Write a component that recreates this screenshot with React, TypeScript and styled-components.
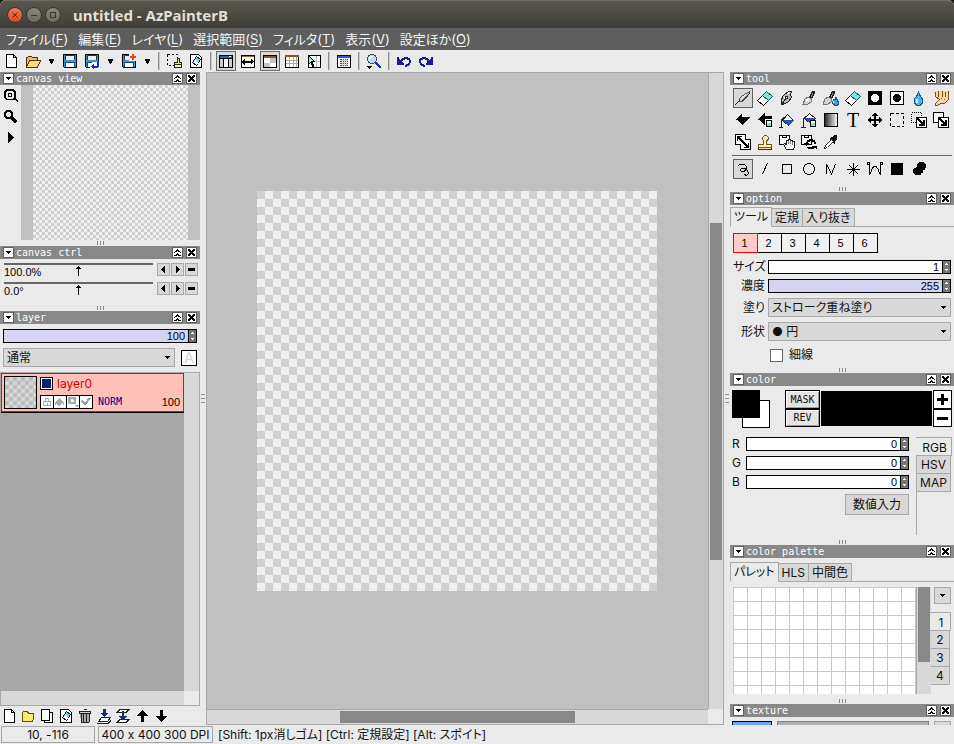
import React from 'react';
import styled, { createGlobalStyle, css } from 'styled-components';

const ui = '"Inter", "Noto Sans CJK JP", sans-serif';
const mono = '"DejaVu Sans Mono", monospace';
const digits = '"Liberation Sans", sans-serif';
const edge = '#a8a8a8';
const face = '#d8d8d8';
const base = '#eaeaea';

const checker = (a: string, b: string, cell: number) => css`
  background: conic-gradient(${a} 25%, ${b} 0 50%, ${a} 0 75%, ${b} 0) 0 0 / ${cell * 2}px ${cell * 2}px;
`;

const Global = createGlobalStyle`
  *, *::before, *::after { box-sizing: border-box; }
  html, body, #root { height: 100%; }
  body { margin: 0; overflow: hidden; background: ${base}; }
  button, input, select { font: inherit; color: inherit; margin: 0; padding: 0; border-radius: 0; }
  button { display: flex; align-items: center; justify-content: center; border: 0; background: none; }
  svg { display: block; flex: none; }
`;

const Window = styled.div`
  display: flex;
  flex-direction: column;
  height: 100vh;
  background: ${base};
  color: #111;
  font: 12px/16px ${ui};
  font-feature-settings: 'palt', 'calt' 0;
`;

const TitleBar = styled.header`
  display: flex;
  align-items: center;
  gap: 3px;
  height: 28px;
  padding: 0 7px;
  border-top: 1px solid #6d6a61;
  border-radius: 6px 6px 0 0;
  background: linear-gradient(#5a574e, #3e3d38);
  box-shadow: 0 -6px 0 6px #111;
  clip-path: inset(0);
`;

const WindowButton = styled.button<{ $close?: boolean }>`
  width: 16px;
  height: 16px;
  border: 1px solid #38372f;
  border-radius: 50%;
  background: ${p => (p.$close ? 'linear-gradient(#f5794f, #df4a1d)' : 'linear-gradient(#8b887e, #6c6a61)')};
`;

const Title = styled.h1`
  margin: 0 0 0 9px;
  color: #e2dfd5;
  font: bold 15px/20px "Noto Sans", sans-serif;
`;

const MenuBar = styled.nav`
  display: flex;
  gap: 10px;
  height: 22px;
  padding: 0 6px;
  background: #5e5e5e;
  color: #f4f4f4;
  font-size: 13px;
`;

const MenuButton = styled.button`
  white-space: nowrap;
  u { text-underline-offset: 2px; }
`;

const ToolBar = styled.div`
  display: flex;
  align-items: center;
  height: 22px;
`;

const BarButton = styled.button<{ $on?: boolean }>`
  width: 20px;
  height: 20px;
  margin: 0 1px;
  border: 1px solid ${p => (p.$on ? '#6a6a6a' : 'transparent')};
  background: ${p => (p.$on ? face : 'transparent')};
`;

const DropButton = styled.button`
  width: 15px;
  height: 20px;
`;

const BarSeparator = styled.span`
  width: 2px;
  height: 18px;
  margin: 0 3px;
  background: linear-gradient(90deg, #8c8c8c 50%, #c8c8c8 0);
`;

const Main = styled.main`
  display: flex;
  flex: 1;
  min-height: 0;
`;

const Dock = styled.aside<{ $w: number }>`
  display: flex;
  flex: none;
  flex-direction: column;
  width: ${p => p.$w}px;
  min-height: 0;
  overflow: hidden;
`;

const Splitter = styled.div`
  display: flex;
  flex: none;
  flex-direction: column;
  align-items: center;
  justify-content: center;
  gap: 3px;
  width: 6px;
  &::before, &::after, & > i { content: ''; width: 4px; height: 1px; background: #909090; }
`;

const Grip = styled.div`
  display: flex;
  flex: none;
  align-items: flex-start;
  justify-content: center;
  gap: 2px;
  height: 6px;
  padding-top: 1px;
  &::before, &::after, & > i { content: ''; width: 1px; height: 4px; background: #888; }
`;

const PanelHeader = styled.div`
  display: flex;
  flex: none;
  align-items: center;
  gap: 3px;
  height: 13px;
  padding: 0 3px;
  background: #888;
  color: #fff;
  font: 10px/13px ${mono};
`;

const PanelTitle = styled.h2`
  flex: 1;
  margin: 0 0 0 -1px;
  font: inherit;
`;

const HeaderButton = styled.button`
  width: 11px;
  height: 11px;
  border: 1px solid #606060;
  background: #fff;
`;

const ViewBody = styled.div`
  display: flex;
  flex: none;
  height: 155px;
`;

const ViewTools = styled.div`
  display: flex;
  flex-direction: column;
  align-items: center;
  gap: 1px;
  width: 21px;
  padding-top: 1px;
`;

const ViewButton = styled.button`
  width: 20px;
  height: 20px;
`;

const Preview = styled.div`
  flex: 1;
  padding: 0 12px;
  background: #c0c0c0;
`;

const PreviewImage = styled.div`
  height: 100%;
  ${checker('#efefef', '#d0d0d0', 3)}
`;

const CtrlBody = styled.div`
  display: flex;
  flex: none;
  flex-direction: column;
  gap: 6px;
  height: 46px;
  padding: 4px 2px 0 3px;
`;

const CtrlRow = styled.div`
  display: flex;
  gap: 1px;
  height: 13px;
`;

const CtrlTrack = styled.div`
  display: grid;
  grid-template-columns: 70px 1fr;
  flex: 1;
  height: 15px;
  margin: 0 3px 0 1px;
  border-top: 2px solid #666;
  color: #000;
  font: 11px/14px ${digits};
`;

const SmallButton = styled.button`
  width: 13px;
  height: 13px;
  border: 1px solid ${edge};
  background: ${face};
`;

const SpinFrame = styled.div<{ $tint?: boolean }>`
  display: flex;
  flex: 1;
  min-width: 0;
  height: 14px;
  border: 1px solid #000;
  background: ${p => (p.$tint ? '#d4d4f0' : '#fff')};
`;

const SpinInput = styled.input`
  flex: 1;
  min-width: 0;
  padding-right: 3px;
  border: 0;
  outline: 0;
  background: none;
  color: #000;
  text-align: right;
  font: 11px/12px ${digits};
`;

const SpinArrows = styled.button`
  width: 8px;
  border-left: 1px solid #000;
  background: #777;
`;

const SelectFrame = styled.div`
  display: grid;
  flex: 1;
  align-items: center;
  min-width: 0;
  height: 19px;
  border: 1px solid ${edge};
  background: ${face};
  & > * { grid-area: 1 / 1; }
  & > svg { justify-self: end; margin-right: 4px; pointer-events: none; }
`;

const SelectBox = styled.select`
  appearance: none;
  width: 100%;
  height: 17px;
  padding: 0 14px 0 3px;
  border: 0;
  outline: 0;
  background: none;
`;

const LayerBody = styled.div`
  display: flex;
  flex: 1;
  flex-direction: column;
  min-height: 0;
`;

const LayerFields = styled.div`
  display: flex;
  flex: none;
  flex-direction: column;
  gap: 5px;
  padding: 5px 3px;
`;

const Line = styled.div`
  display: flex;
  align-items: center;
  gap: 6px;
`;

const AlphaButton = styled.button`
  width: 16px;
  height: 16px;
  border: 1px solid #000;
  background: #fff;
  color: #d4d4d4;
  font: 14px/14px ${ui};
`;

const LayerList = styled.div`
  display: grid;
  flex: 1;
  grid-template: 1fr 14px / 1fr 15px;
  min-height: 0;
  border: 1px solid ${edge};
`;

const LayerItems = styled.ul`
  margin: 0;
  padding: 0;
  background: ${edge};
  list-style: none;
`;

const Groove = styled.div`
  background: ${face};
`;

const LayerItem = styled.li`
  display: flex;
  gap: 3px;
  height: 39px;
  padding: 2px;
  border: 1px solid #f00;
  background: #ffc0b8;
  box-shadow: 0 1px 0 #000;
`;

const LayerThumb = styled.div`
  width: 33px;
  height: 33px;
  border: 1px solid #000;
  ${checker('#d6d6d6', '#bcbcbc', 4)}
`;

const LayerInfo = styled.div`
  display: flex;
  flex: 1;
  flex-direction: column;
  justify-content: space-between;
  padding: 1px 0 0;
`;

const LayerName = styled.div`
  display: flex;
  align-items: center;
  gap: 4px;
  height: 13px;
  color: #d00000;
`;

const VisibleButton = styled.button`
  width: 13px;
  height: 13px;
  border: 1px solid #000;
  background: #00207c;
  box-shadow: inset 0 0 0 1px #fff;
`;

const LayerFlags = styled.div`
  display: flex;
  align-items: center;
  height: 14px;
  color: #000080;
  font: 10px/14px ${mono};
`;

const FlagButton = styled.button`
  width: 14px;
  height: 14px;
  margin-right: -1px;
  border: 1px solid #000;
  background: #fff;
`;

const BlendName = styled.span`
  flex: 1;
  margin-left: 6px;
`;

const LayerOpacity = styled.span`
  padding-right: 1px;
  color: #000;
  font: 11px/14px ${digits};
`;

const LayerTools = styled.div`
  display: flex;
  flex: none;
  align-items: center;
  gap: 1px;
  height: 19px;
`;

const LayerToolButton = styled.button`
  width: 18px;
  height: 18px;
`;

const CanvasArea = styled.section`
  display: grid;
  flex: 1;
  grid-template: 1fr 15px / 1fr 15px;
  min-width: 0;
  border: 1px solid ${edge};
`;

const CanvasView = styled.div`
  display: flex;
  align-items: center;
  justify-content: center;
  padding-right: 1px;
  overflow: hidden;
  background: #c0c0c0;
`;

const CanvasImage = styled.div`
  flex: none;
  width: 400px;
  height: 400px;
  ${checker('#efefef', '#d0d0d0', 8)}
`;

const VScroll = styled.div`
  display: grid;
  grid-template-rows: 150fr 337fr 149fr;
  padding: 0 1px;
  border-left: 1px solid ${edge};
  background: ${face};
`;

const HScroll = styled.div`
  display: grid;
  grid-template-columns: 133fr 235fr 133fr;
  padding: 1px 0;
  border-top: 1px solid ${edge};
  background: ${face};
`;

const Thumb = styled.div<{ $col?: boolean }>`
  ${p => (p.$col ? 'grid-column: 2;' : 'grid-row: 2;')}
  background: #888;
`;

const ToolBody = styled.div`
  flex: none;
  padding: 3px 2px 7px;
`;

const ToolGrid = styled.div`
  display: grid;
  grid-template-columns: repeat(10, 20px);
  gap: 2px;
  padding-left: 1px;
`;

const ToolRule = styled.hr`
  height: 1px;
  margin: 3px 0;
  border: 0;
  background: #666;
`;

const ToolButton = styled.button<{ $on?: boolean }>`
  width: 20px;
  height: 20px;
  border: 1px solid ${p => (p.$on ? '#606060' : 'transparent')};
  background: ${p => (p.$on ? face : 'transparent')};
  color: #000;
  font: 20px/18px "Liberation Serif", serif;
`;

const TabRow = styled.div`
  display: flex;
  align-items: flex-end;
  height: 20px;
  &::after { content: ''; flex: 1; border-bottom: 1px solid ${edge}; }
`;

const Tab = styled.button<{ $on?: boolean }>`
  height: ${p => (p.$on ? 20 : 19)}px;
  padding: 0 3px;
  border: 1px solid ${edge};
  border-left-width: ${p => (p.$on ? 1 : 0)}px;
  ${p => p.$on && 'border-bottom-color: transparent;'}
  background: ${p => (p.$on ? base : face)};
  white-space: nowrap;
`;

const OptionBody = styled.div`
  flex: none;
  height: 162px;
  padding-top: 2px;
`;

const PresetRow = styled.div`
  display: flex;
  margin: 6px 3px 7px;
`;

const Preset = styled.button<{ $on?: boolean }>`
  width: 25px;
  height: 20px;
  margin-right: -1px;
  border: 1px solid ${p => (p.$on ? '#f00' : '#000')};
  ${p => p.$on && 'z-index: 1;'}
  background: ${p => (p.$on ? '#ffcaca' : '#f0f0f0')};
  padding-right: 2px;
  color: #000;
  font: 11px/18px ${digits};
`;

const OptionFields = styled.div`
  display: grid;
  grid-template-columns: 32px 1fr;
  gap: 5px 3px;
  align-items: center;
  padding: 0 3px;
  & > label { line-height: 14px; text-align: right; white-space: nowrap; }
`;

const CheckLabel = styled.label`
  display: flex;
  align-items: center;
  gap: 6px;
  margin: 7px 0 0 40px;
  line-height: 14px;
`;

const CheckBox = styled.input`
  appearance: none;
  width: 13px;
  height: 13px;
  margin: 0;
  border: 1px solid #666;
  background: #fff;
`;

const ColorBody = styled.div`
  flex: none;
  height: 153px;
  padding: 4px 2px 0;
`;

const ColorTop = styled.div`
  display: grid;
  grid-template-columns: 53px 35px 1fr 19px;
  height: 38px;
`;

const SwatchPair = styled.div`
  display: grid;
  grid-template: 10px 18px 10px / 10px 18px 10px;
`;

const Swatch = styled.button<{ $back?: boolean }>`
  grid-area: ${p => (p.$back ? '2 / 2 / 4 / 4' : '1 / 1 / 3 / 3')};
  border: 1px solid #000;
  background: ${p => (p.$back ? '#fff' : '#000')};
`;

const ButtonStack = styled.div`
  display: grid;
  grid-template-rows: 19px 18px;
`;

const MaskButton = styled.button`
  border: 1px solid #000;
  background: #e4e4e4;
  box-shadow: inset 1px 1px 0 #fff, inset -1px -1px 0 #a0a0a0;
  font: 10px/16px ${mono};
`;

const StepButton = styled.button`
  border: 1px solid #000;
  background: #fff;
`;

const MaskColor = styled.div`
  margin: 1px 1px 2px;
  background: #000;
`;

const ColorMain = styled.div`
  display: flex;
  gap: 7px;
  margin-top: 9px;
`;

const Channels = styled.div`
  display: grid;
  flex: 1;
  grid-template-columns: 11px 1fr;
  gap: 5px 3px;
  align-content: start;
  & > label { line-height: 14px; }
`;

const ValueButton = styled.button`
  grid-column: 2;
  justify-self: end;
  height: 21px;
  padding: 0 7px;
  border: 1px solid ${edge};
  background: ${face};
`;

const SideTabs = styled.div<{ $h: number }>`
  display: flex;
  flex-direction: column;
  width: 36px;
  height: ${p => p.$h}px;
  border-left: 1px solid ${edge};
`;

const SideTab = styled.button<{ $on?: boolean }>`
  height: 19px;
  margin: 0 ${p => (p.$on ? 0 : 1)}px -1px ${p => (p.$on ? -1 : 0)}px;
  ${p => p.$on && 'padding-left: 2px; padding-top: 2px;'}
  border: 1px solid ${edge};
  border-left: 0;
  background: ${p => (p.$on ? base : face)};
`;

const PaletteBody = styled.div`
  flex: none;
  height: 140px;
  padding-top: 4px;
`;

const PaletteRow = styled.div`
  display: flex;
  height: 107px;
  margin: 5px 3px 0;
`;

const PaletteGrid = styled.div`
  flex: 1;
  border: solid #c8c8c8;
  border-width: 1px 0 0 1px;
  background:
    repeating-linear-gradient(90deg, transparent 0 13px, #c8c8c8 13px 14px),
    repeating-linear-gradient(#fff 0 13px, #c8c8c8 13px 14px);
`;

const PaletteScroll = styled.div`
  display: grid;
  grid-template-rows: 0 75px 1fr;
  width: 15px;
  padding: 0 1px;
  border-left: 1px solid ${edge};
  background: ${face};
`;

const PaletteSide = styled.div`
  display: flex;
  flex-direction: column;
  width: 20px;
`;

const PaletteMenu = styled.button`
  align-self: flex-end;
  width: 17px;
  height: 17px;
  margin-bottom: 8px;
  border: 1px solid ${edge};
  background: ${face};
`;

const TextureBody = styled.div`
  display: flex;
  flex: none;
  align-items: flex-start;
  gap: 5px;
  padding: 4px 3px 0 2px;
`;

const TextureSwatch = styled.button`
  width: 40px;
  height: 24px;
  border: 1px solid #000;
  background: #6ca6f0;
`;

const TextureName = styled.div`
  flex: 1;
  height: 24px;
  border: 1px solid #808080;
  background: #b0b0b0;
`;

const StatusBar = styled.footer`
  display: flex;
  align-items: center;
  gap: 3px;
  height: 19px;
  padding: 0 1px;
  white-space: nowrap;
`;

const StatusBox = styled.output<{ $w: number }>`
  min-width: ${p => p.$w}px;
  height: 17px;
  padding: 0 2px;
  border: 1px solid ${edge};
  line-height: 16px;
  text-align: center;
`;

const StatusHelp = styled.span`
  margin-left: 2px;
  line-height: 16px;
`;

type ArtProps = { w?: number; h?: number; children: React.ReactNode; soft?: boolean };
const Art = ({ w = 16, h = w, children, soft }: ArtProps) => (
  <svg width={w} height={h} viewBox={`0 0 ${w} ${h}`} fill="none" stroke="none"
    shapeRendering={soft ? 'auto' : 'crispEdges'} aria-hidden="true">{children}</svg>
);

const Down = () => <Art w={5} h={3}><path d="M0 0h5v1H4v1H3v1H2V2H1V1H0z" fill="#000" /></Art>;
const BigDown = () => <Art w={5} h={5}><path d="M0 0h5v2H4v2H3v1H2V4H1V2H0z" fill="#000" /></Art>;
const Collapse = () => (
  <Art w={9}><path d="M4 1h1v1h1v1h1v1H5V3H4v1H2V3h1V2h1zM4 5h1v1h1v1h1v1H5V7H4v1H2V7h1V6h1zM1 4h1v1H1zM7 4h1v1H7zM1 8h1v-1H1zM7 8h1v-1H7z" fill="#000" /></Art>
);
const Cross = () => (
  <Art w={9}><path d="M1 1h2v1h1v1h1V2h1V1h2v2H7v1H6v1h1v1h1v2H6V7H5V6H4v1H3v1H1V6h1V5h1V4H2V3H1z" fill="#000" /></Art>
);
const Spin = () => <Art w={5} h={10}><path d="M2 1h1v1h1v1H1V2h1zM1 7h3v1H3v1H2V8H1z" fill="#fff" /></Art>;

const disk = (
  <>
    <path d="M1.500 1.500h13v13h-12l-1-1z" fill="#3f97cc" stroke="#000" />
    <path d="M4 2h8v5H4z" fill="#e9eef2" /><path d="M4 2h8v1H4zM3 2h1v5H3zM12 2h1v5h-1z" fill="#173d5c" />
    <path d="M4 9h8v5H4z" fill="#fff" /><path d="M3 9h1v5H3zM12 9h1v5h-1zM4 9h8v1H4z" fill="#14466b" />
  </>
);
const page = <path d="M3.500 1.500h7l3 3v10h-10zM10.500 1.500v3h3" fill="#fff" stroke="#000" />;
const win = (
  <>
    <path d="M1.500 2.500h13v12h-13z" fill="#fff" stroke="#000" />
    <path d="M2 3h12v2H2z" fill="#2460c0" />
  </>
);
const boxArrow = (
  <>
    <path d="M5.500 5.500h10v10h-10z" fill="#fff" stroke="#000" />
    <path d="M6 6h2v1h1v1h1v1h1v1h1V8h2v6H8v-2h2v-1H9v-1H8V9H7V8H6z" fill="#000" />
  </>
);

const icons: Record<string, React.ReactNode> = {
  new: page,
  open: (
    <>
      <path d="M1.500 14V4.500h1l1-1h3l1 1h5V7" fill="#e8bf58" stroke="#4a3508" />
      <path d="M1.500 14.500L4.500 7.500h11l-3 7z" fill="#f7df7c" stroke="#4a3508" />
    </>
  ),
  save: disk,
  saveAs: (
    <>
      {disk}
      <path d="M8 9h8v7H6v-4h2z" fill="#fff" />
      <path d="M13 9h2v5h-1v1h-4v1H9v-1H8v-1H7v-1h1v-1h1v-1h1v2h3z" fill="#1420f0" />
    </>
  ),
  savePlus: (
    <>
      {disk}
      <path d="M8 0h8v8H8z" fill={base} />
      <path d="M11 1h2v2h2v2h-2v2h-2V5H9V3h2z" fill="#e8480c" />
    </>
  ),
  selClear: (
    <>
      <path d="M1.500 1.500h10v11h-10z" stroke="#000" strokeDasharray="2 2" />
      <path d="M8 8h8v8H8z" fill={base} />
      <path d="M11.500 5.500h2v4h2v2h-7v-2h3z" fill="#f0e070" stroke="#2a2410" />
      <path d="M8.500 11.500h7v3h-7z" fill="#fff8b0" stroke="#2a2410" />
    </>
  ),
  docErase: (
    <>
      <path d="M2.500 1.500h8l3 3v10h-11z" fill="#fff" stroke="#000" />
      <path d="M4.500 9.500l4-6 4 3-4 6z" fill="#7fd4ea" stroke="#123" /><path d="M5 9l2-2 3 3-2 2z" fill="#fff" />
    </>
  ),
  panels: (
    <>
      {win}<path d="M2 6h3v8H2zM11 6h3v8h-3z" fill="#d0d0d0" /><path d="M2 5h12v1H2zM5 5h1v9H5zM10 5h1v9h-1z" fill="#000" />
      <path d="M11 3h2v1h-2z" fill="#fff" />
    </>
  ),
  fit: (
    <>
      {win}<path d="M2 3h12v1H2z" fill="#9a6a20" /><path d="M2 4h12v1H2z" fill="#fff" />
      <path d="M5 6v2h6V6h1v1h1v1h1v1h-1v1h-1v1h-1v-1H5v2H4v-1H3v-1H2V8h1V7h1V6z" fill="#000" />
    </>
  ),
  checks: (
    <>
      {win}<path d="M2 3h12v2H2z" fill="#8a5a14" /><path d="M8 5h6v5H8zM2 10h6v4H2z" fill="#c4c4c4" />
    </>
  ),
  grid: (
    <>
      <path d="M1.500 2.500h13v12h-13z" fill="#fff" stroke="#000" /><path d="M1 2h14v2H1z" fill="#8a5a14" />
      <path d="M5.500 4v10M9.500 4v10M12.500 4v10M2 7.500h12M2 10.500h12" stroke="#aaa" />
    </>
  ),
  cursor: (
    <>
      <path d="M2.500 2.500h12v12h-12z" fill="#fff" stroke="#000" /><path d="M10.500 3v11M8 8.500h6" stroke="#c0c0c0" />
      <path d="M2 2h1v1h1v1h1v1h1v1h1v1h1v1h1v1H7v2h1v3H6v-2H5v-2H4v1H3v1H2z" fill="#000" />
      <path d="M3 4h1v1h1v1h1v1h1v1H5v1H4v1H3z" fill="#9ee2ea" />
    </>
  ),
  calc: (
    <>
      {win}<path d="M4 6h8v7H4z" fill="#444" /><path d="M4 7.500h8M4 9.500h8M4 11.500h8M6.500 6v7M8.500 6v7M10.500 6v7" stroke="#ddd" />
    </>
  ),
  zoom: (
    <>
      <path d="M9 9h2v1h1v1h1v1h1v1h1v2h-2v-1h-1v-1h-1v-1h-1v-1H9z" fill="#15308c" />
      <path d="M4 1h4v1h2v2h1v4h-1v2H8v1H4v-1H2V8H1V4h1V2h2z" fill="#3c4a58" />
      <path d="M4 2h4v1h1v1h1v4H9v1H8v1H4V9H3V8H2V4h1V3h1z" fill="#b8e0f6" /><path d="M4 3h3v1H5v2H4v1H3V4h1z" fill="#fff" />
      <path d="M1 13h5v1H5v1H4v1H3v-1H2v-1H1z" fill="#000" />
    </>
  ),
  undo: (
    <>
      <path d="M5 10c1-6 8-6 9-2 0 3-1 4-5 5" stroke="#1a1c88" strokeWidth="2" />
      <path d="M1 4h2v2h1v1h1v1h1v1h1v1h1v2H1z" fill="#1a1c88" />
    </>
  ),
  redo: (
    <>
      <path d="M11 10c-1-6-8-6-9-2 0 3 1 4 5 5" stroke="#1a1c88" strokeWidth="2" />
      <path d="M15 4h-2v2h-1v1h-1v1h-1v1H9v1H8v2h7z" fill="#1a1c88" />
    </>
  ),
  pencil: (
    <>
      <path d="M0 14h1v-1h1v-1h1v-1h1v1H3v1H2v1H1v1H0z" fill="#222" />
      <path d="M4.500 11.500v-3l2-2 8-5v2l-6 7-2 1z" fill="#c8c8c8" stroke="#555" />
      <path d="M6 9l5-5" stroke="#fff" /><path d="M7 11l8-8" stroke="#222" />
    </>
  ),
  eraser: (
    <>
      <path d="M9.500 1.500l6 5-9 9-6-5z" fill="#fff" stroke="#000" />
      <path d="M9.500 1.500l6 5-4 4-6-5z" fill="#82e4de" stroke="#256" />
    </>
  ),
  nib: (
    <>
      <path d="M2.500 14.500v-4l1-4 3-3 4-2h2l-1 3 1 3-3 4-3 2z" fill="#b4b8b8" stroke="#222" />
      <path d="M3 14l4-6" stroke="#222" /><path d="M6 6h3v3H6z" fill="#222" /><path d="M7 7h1v1H7z" fill="#fff" />
      <path d="M8 4l3-2M5 7v2" stroke="#fff" />
    </>
  ),
  brush: (
    <>
      <path d="M8 8V6h1V4h1V2h1V1h3v3h-1v2h-1v2h-1v1z" fill="#222" /><path d="M11 3h1v2h-1v2h-1V5h1z" fill="#888" />
      <path d="M2 14l2-5 3-2 4 2-1 3-3 2z" fill="#d4d4d4" stroke="#777" /><path d="M5 11l3-2" stroke="#fff" strokeWidth="2" />
    </>
  ),
  wetBrush: (
    <>
      <path d="M6 8V6h1V4h1V2h1V1h3v3h-1v2h-1v2H9v1z" fill="#222" /><path d="M9 3h1v2H9v2H8V5h1z" fill="#888" />
      <path d="M0 14l2-5 3-2 4 2-1 3-3 2z" fill="#d4d4d4" stroke="#777" />
      <path d="M12 7h1v2h1v2h1v3h-1v1h-3v-1h-1v-1H9v-2h1V9h2z" fill="#38a8ea" stroke="#0a5a9a" /><path d="M10 11h1v2h-1z" fill="#fff" />
    </>
  ),
  maskIn: <><path d="M1 1h14v14H1z" fill="#000" /><path d="M6 4h4v1h1v1h1v4h-1v1h-1v1H6v-1H5v-1H4V6h1V5h1z" fill="#fff" /></>,
  maskOut: <><path d="M1.500 1.500h13v13h-13z" fill="#fff" stroke="#000" /><path d="M6 4h4v1h1v1h1v4h-1v1h-1v1H6v-1H5v-1H4V6h1V5h1z" fill="#000" /></>,
  drop: (
    <>
      <path d="M7.500 1l1 4 3 4v4l-2 2h-4l-2-2V9l3-4z" fill="#4cb4ee" stroke="#14578c" /><path d="M5 9h2v4H5z" fill="#d8f4ff" />
    </>
  ),
  finger: (
    <>
      <path d="M1 1h14v9l-2 3H9l-5 3H2v-2l4-4-4-3z" fill="#f6d8a4" />
      <path d="M2 2l1 5 3 2M5 1l1 6M9 1v6M12 2v5M15 1v9l-3 3H9l-6 3-1-2 5-5M8 8h1M11 9h1" stroke="#7c4d18" />
    </>
  ),
  polyLeft: <path d="M1 7h1V6h1V5h1V4h1V3h1V2h1v3h8v1h-1v1h-1v1h-1v1h-1v1h-1v1H9v1H8v1H7v-1H6v-1H5v-1H4V9H3V8H1z" fill="#000" />,
  polyLeftErase: (
    <>
      <path d="M1 7h1V6h1V5h1V4h1V3h1V2h1V1h1v3h7v4H8v5H7v-1H6v-1H5v-1H4V9H3V8H1z" fill="#000" />
      <path d="M8.500 7.500h6v8h-6z" fill="#7fe0da" stroke="#fff" /><path d="M9.500 8.500h5v6h-5z" fill="#7fe0da" stroke="#000" /><path d="M10 9h4v2h-4z" fill="#fff" />
    </>
  ),
  bucket: (
    <>
      <path d="M8.500 2.500l6 6-5 5-6-5z" fill="#fff" stroke="#222" /><path d="M3 8h12l-5 5H8z" fill="#2450c0" />
      <path d="M8.500 2.500L2.500 8v7M0 15.500h4" stroke="#222" />
    </>
  ),
  bucketErase: (
    <>
      <path d="M8.500 1.500l6 5-5 5-6-5z" fill="#fff" stroke="#222" /><path d="M4 6h10l-4 5H8z" fill="#2450c0" />
      <path d="M8.500 1.500L2.500 7v8M0 15.500h5" stroke="#222" />
      <path d="M9.500 8.500h5v6h-5z" fill="#7fe0da" stroke="#000" /><path d="M10 9h4v2h-4z" fill="#fff" />
    </>
  ),
  gradient: (
    <>
      <defs><linearGradient id="fade"><stop stopColor="#222" /><stop offset="1" stopColor="#fff" /></linearGradient></defs>
      <path d="M1.500 1.500h13v13h-13z" fill="url(#fade)" stroke="#000" />
    </>
  ),
  move: <path d="M7 1h2v1h1v1h1v1H9v3h3V5h1v1h1v1h1v2h-1v1h-1v1h-1V9H9v3h2v1h-1v1H9v1H7v-1H6v-1H5v-1h2V9H4v2H3v-1H2V9H1V7h1V6h1V5h1v2h3V4H5V3h1V2h1z" fill="#000" />,
  selRect: <path d="M1.500 1.500h13v13h-13z" stroke="#000" strokeDasharray="3 2" />,
  selMove: <><path d="M0.500 0.500h10v10h-10z" stroke="#000" strokeDasharray="1 1" />{boxArrow}</>,
  copyMove: <><path d="M0.500 0.500h10v10h-10z" fill="#fff" stroke="#000" />{boxArrow}</>,
  resize: (
    <>
      <path d="M5.500 5.500h10v10h-10z" fill="#fff" stroke="#000" /><path d="M0.500 0.500h10v10h-10z" fill="#fff" stroke="#000" />
      <path d="M6 6h6v6H6z" fill="#fff" />
      <path d="M2 2h5v1H5v1h1v1h1v1h1v1h1v1h1v1h1v1h1v1h1V9h1v5H9v-1h2v-1h-1v-1H9v-1H8V9H7V8H6V7H5V6H4V5H3v2H2z" fill="#000" />
    </>
  ),
  stamp: (
    <>
      <path d="M5.500 3.500l2-2h2l2 2v2l-2 1v4h5v3h-13v-3h5v-4l-1-1z" fill="#fbeeb8" stroke="#6b5a20" /><path d="M1 14h14v2H1z" fill="#3a2e08" /><path d="M2 14h12v1H2z" fill="#f5e4a0" />
    </>
  ),
  hand: (
    <>
      <path d="M0.500 1.500h10v9h-10z" fill="#fff" stroke="#000" /><path d="M3 1v2h4V1" stroke="#000" />
      <path d="M7.500 15.500l-3-5 1-1 2 1v-4h2v-1h2v1h2v1h2v5l-1 3z" fill="#fff" stroke="#222" /><path d="M9.500 7v3M11.500 7v3M13.500 8v3" stroke="#777" />
    </>
  ),
  rotate: (
    <>
      <path d="M0.500 1.500h10v9h-10z" fill="#fff" stroke="#000" /><path d="M3 1v2h4V1" stroke="#000" />
      <path d="M6 10c0-5 8-5 8 0M13 13c-1 2-5 2-6 0" stroke="#000" strokeWidth="2" /><path d="M3 9h5v1H7v1H6v1H5v-1H4v-1H3zM11 12h5v3h-1v-1h-1v-1h-3z" fill="#000" />
    </>
  ),
  dropper: (
    <>
      <path d="M9 3l2-2h3v4l-3 3 1 1-1 1-5-5 1-1z" fill="#111" /><path d="M8.500 5.500l2 2-6 6-3 1 1-3z" fill="#fff" stroke="#333" />
    </>
  ),
  freehand: <path d="M2.500 5.500c2-3 9-3 9 1s-5 6-6 3 5-3 7 0 0 6-3 4" stroke="#000" />,
  line: <path d="M5.500 13l5-11" stroke="#000" />,
  rect: <path d="M3.500 3.500h9v9h-9z" stroke="#000" />,
  circle: <path d="M6 2.500h4M6 13.500h4M2.500 6v4M13.500 6v4M4 3.500h2M10 3.500h2M3.500 4v2M12.500 4v2M3.500 10v2M12.500 10v2M4 12.500h2M10 12.500h2" stroke="#000" />,
  poly: <path d="M3.500 13V3l5 10 4-10" stroke="#000" />,
  star: <path d="M8.500 2v13M2 8.500h13M4 4l9 9M13 4l-9 9" stroke="#000" />,
  bezier: (
    <>
      <path d="M2 3l1 11M14 3l-1 11M3.500 13c2-10 7-10 9 0" stroke="#000" /><path d="M0.500 1.500h2v2h-2zM13.500 1.500h2v2h-2z" fill="#fff" stroke="#000" />
    </>
  ),
  fillRect: <path d="M2 2h12v12H2z" fill="#000" />,
  blob: <path d="M8 1h5v1h1v1h1v4h-1v2h-2v3h-2v2H4v-1H3v-1H2V8h1V7h2V6h1V3h1V2h1z" fill="#000" />,
  folder: <path d="M2.500 13.500v-9l1-1h4l1 2h5v5l-1 3z" fill="#f8ec70" stroke="#5a5000" />,
  copy: <><path d="M5.500 4.500h8v10h-8z" fill="#fff" stroke="#000" /><path d="M2.500 1.500h8v11h-8z" fill="#fff" stroke="#000" /></>,
  trash: (
    <>
      <path d="M3 5h10l-1 10H4z" fill="#aaa" /><path d="M4 6v8M6.500 6v8M9.500 6v8M12 6v8" stroke="#222" />
      <path d="M6.500 1.500h3M2.500 3.500h11v2h-11zM4 14.500h8" fill="#ccc" stroke="#222" />
    </>
  ),
  mergeDown: (
    <>
      <path d="M2.500 13.500l3-4h9l-3 4zM1 15.500h11l3-3" fill="#fff" stroke="#222" /><path d="M7 1h3v4h2v1h-1v1h-1v1H9v1H8V8H7V7H6V6H5V5h2z" fill="#12307c" />
    </>
  ),
  mergeAll: (
    <>
      <path d="M2 4.500l3-3h9l-3 3zM2 14.500l3-3h9l-3 3z" fill="#fff" stroke="#222" /><path d="M7 3h2v5h3v1h-1v1h-1v1H9v1H7v-1H6v-1H5V9H4V8h3z" fill="#12307c" />
    </>
  ),
  up: <path d="M8 2h1v1h1v1h1v1h1v1h1v1h1v1h-4v6H7V8H3V7h1V6h1V5h1V4h1V3h1z" fill="#000" />,
  down: <path d="M8 14h1v-1h1v-1h1v-1h1v-1h1V9h1V8h-4V2H7v6H3v1h1v1h1v1h1v1h1v1h1z" fill="#000" />,
  viewFit: (
    <>
      <path d="M3 1h8v1h1v1h1v8h-1v1H3v-1H2v-1H1V3h1V2h1z" fill="#000" /><path d="M4 3h6v1h1v6h-1v1H4v-1H3V4h1z" fill={base} />
      <path d="M5.500 5.500h3v3h-3z" stroke="#000" /><path d="M11 10h2v1h1v1h1v2h-1v-1h-1v-1h-1v-1h-1z" fill="#000" />
    </>
  ),
  viewZoom: (
    <>
      <path d="M3 1h5v1h1v1h1v5H9v1H8v1H3V9H2V8H1V3h1V2h1z" fill="#000" /><path d="M4 3h3v1h1v3H7v1H4V7H3V4h1z" fill={base} />
      <path d="M9 8h2v1h1v1h1v1h1v2h-1v1h-2v-1h-1v-1H9v-1H8V9h1z" fill="#000" />
    </>
  ),
  viewMenu: <path d="M5 2h1v1h1v1h1v1h1v1h1v1h1v1h-1v1H9v1H8v1H7v1H6v1H5z" fill="#000" />,
};

const Pic = ({ name }: { name: string }) => <Art>{icons[name]}</Art>;

const Header = ({ title }: { title: string }) => (
  <PanelHeader>
    <HeaderButton aria-label={`${title} menu`}><Down /></HeaderButton>
    <PanelTitle>{title}</PanelTitle>
    <HeaderButton aria-label={`Collapse ${title}`}><Collapse /></HeaderButton>
    <HeaderButton aria-label={`Close ${title}`}><Cross /></HeaderButton>
  </PanelHeader>
);

const SpinField = ({ id, value, tint, label }: { id?: string; value: string; tint?: boolean; label: string }) => (
  <SpinFrame $tint={tint}>
    <SpinInput id={id} type="text" defaultValue={value} aria-label={label} />
    <SpinArrows aria-label={`${label} ±`}><Spin /></SpinArrows>
  </SpinFrame>
);

const Choice = ({ id, value, label }: { id?: string; value: string; label: string }) => (
  <SelectFrame>
    <SelectBox id={id} aria-label={label}><option>{value}</option></SelectBox>
    <Down />
  </SelectFrame>
);

const Slide = ({ value, label }: { value: string; label: string }) => (
  <CtrlRow>
    <CtrlTrack>
      <span>{value}</span>
      <Art w={9} h={11}><path d="M4 1h1v1h1v1h1v1H5v7H4V4H2V3h1V2h1z" fill="#000" /></Art>
    </CtrlTrack>
    <SmallButton aria-label={`${label} −`}><Art w={7}><path d="M1 3h1V2h1V1h1V0h1v7H4V6H3V5H2V4H1z" fill="#000" /></Art></SmallButton>
    <SmallButton aria-label={`${label} +`}><Art w={7}><path d="M6 3H5V2H4V1H3V0H2v7h1V6h1V5h1V4h1z" fill="#000" /></Art></SmallButton>
    <SmallButton aria-label={`${label} reset`}><Art w={7}><path d="M0 2h7v3H0z" fill="#000" /></Art></SmallButton>
  </CtrlRow>
);

const menus = [['ファイル', 'F'], ['編集', 'E'], ['レイヤ', 'L'], ['選択範囲', 'S'], ['フィルタ', 'T'], ['表示', 'V'], ['設定ほか', 'O']];
const bar = ['new', 'open', 'v', 'save', 'saveAs', 'v', 'savePlus', 'v', '|', 'selClear', 'docErase', '|', 'panels*', 'fit', 'checks*', 'grid', 'cursor', '|', 'calc', '|', 'zoom', '|', 'undo', 'redo'];
const tools = ['pencil', 'eraser', 'nib', 'brush', 'wetBrush', 'eraser', 'maskIn', 'maskOut', 'drop', 'finger', 'polyLeft', 'polyLeftErase', 'bucket', 'bucketErase', 'gradient', 'T', 'move', 'selRect', 'selMove', 'copyMove', 'resize', 'stamp', 'hand', 'rotate', 'dropper'];
const shapes = ['freehand', 'line', 'rect', 'circle', 'poly', 'star', 'bezier', 'fillRect', 'blob'];
const layerTools = ['new', 'folder', 'copy', 'docErase', 'trash', 'mergeDown', 'mergeAll', 'up', 'down'];
const flags: [string, React.ReactNode][] = [
  ['lock', <path d="M2.500 5.500h7v4h-7zM4.500 5V2.500h3V5M6 7v2" stroke="#aaa" />],
  ['fill', <path d="M1 9V6h1V5h1V4h1V3h1V2h1v1h1v1h1v1h1v1h1v3H9V7H8v1H7v1H6v1H4V9H3V8H2v1z" fill="#aaa" />],
  ['mask', <><path d="M1 1h8v7H1zM8 9h4v1h-1v1H9v-1H8z" fill="#aaa" /><path d="M4 3h2v1h1v2H4z" fill="#fff" /></>],
  ['check', <path d="M2 5l3 3 5-6" stroke="#999" strokeWidth="2" />],
];

export default function App() {
  return (
    <Window>
      <Global />
      <TitleBar>
        <WindowButton $close aria-label="Close"><Art w={8} soft><path d="M1.500 1.500l5 5M6.500 1.500l-5 5" stroke="#5a2410" /></Art></WindowButton>
        <WindowButton aria-label="Minimize"><Art w={8}><path d="M1 4.500h6" stroke="#3a3934" /></Art></WindowButton>
        <WindowButton aria-label="Maximize"><Art w={8}><path d="M1.500 1.500h5v5h-5z" stroke="#3a3934" /></Art></WindowButton>
        <Title>untitled - AzPainterB</Title>
      </TitleBar>
      <MenuBar>
        {menus.map(([name, key]) => <MenuButton key={key}><span>{name}(<u>{key}</u>)</span></MenuButton>)}
      </MenuBar>
      <ToolBar>
        {bar.map((b, i) => {
          if (b === '|') return <BarSeparator key={i} />;
          if (b === 'v') return <DropButton key={i} aria-label={`${bar[i - 1]} menu`}><BigDown /></DropButton>;
          const name = b.replace('*', '');
          return <BarButton key={i} $on={b !== name} aria-label={name}><Pic name={name} /></BarButton>;
        })}
      </ToolBar>
      <Main>
        <Dock $w={200}>
          <Header title="canvas view" />
          <ViewBody>
            <ViewTools>
              {['viewFit', 'viewZoom', 'viewMenu'].map(n => <ViewButton key={n} aria-label={n}><Pic name={n} /></ViewButton>)}
            </ViewTools>
            <Preview><PreviewImage /></Preview>
          </ViewBody>
          <Grip><i /></Grip>
          <Header title="canvas ctrl" />
          <CtrlBody>
            <Slide value="100.0%" label="Zoom" />
            <Slide value="0.0°" label="Angle" />
          </CtrlBody>
          <Grip><i /></Grip>
          <Header title="layer" />
          <LayerBody>
            <LayerFields>
              <Line><SpinField value="100" tint label="Layer opacity" /></Line>
              <Line>
                <Choice value="通常" label="Blend mode" />
                <AlphaButton aria-label="Alpha mask">A</AlphaButton>
              </Line>
            </LayerFields>
            <LayerList>
              <LayerItems>
                <LayerItem>
                  <LayerThumb />
                  <LayerInfo>
                    <LayerName><VisibleButton aria-label="Visible" />layer0</LayerName>
                    <LayerFlags>
                      {flags.map(([n, art]) => <FlagButton key={n} aria-label={n}><Art w={12}>{art}</Art></FlagButton>)}
                      <BlendName>NORM</BlendName>
                      <LayerOpacity>100</LayerOpacity>
                    </LayerFlags>
                  </LayerInfo>
                </LayerItem>
              </LayerItems>
              <Groove />
              <Groove />
            </LayerList>
            <LayerTools>
              {layerTools.map(n => <LayerToolButton key={n} aria-label={n}><Pic name={n} /></LayerToolButton>)}
            </LayerTools>
          </LayerBody>
        </Dock>
        <Splitter><i /></Splitter>
        <CanvasArea>
          <CanvasView><CanvasImage /></CanvasView>
          <VScroll><Thumb /></VScroll>
          <HScroll><Thumb $col /></HScroll>
        </CanvasArea>
        <Splitter><i /></Splitter>
        <Dock $w={224}>
          <Header title="tool" />
          <ToolBody>
            <ToolGrid>
              {tools.map((t, i) => (
                <ToolButton key={i} $on={i === 0} aria-label={t}>{t === 'T' ? 'T' : <Pic name={t} />}</ToolButton>
              ))}
            </ToolGrid>
            <ToolRule />
            <ToolGrid>
              {shapes.map((t, i) => <ToolButton key={t} $on={i === 0} aria-label={t}><Pic name={t} /></ToolButton>)}
            </ToolGrid>
          </ToolBody>
          <Grip><i /></Grip>
          <Header title="option" />
          <OptionBody>
            <TabRow><Tab $on>ツール</Tab><Tab>定規</Tab><Tab>入り抜き</Tab></TabRow>
            <PresetRow>{[1, 2, 3, 4, 5, 6].map(n => <Preset key={n} $on={n === 1}>{n}</Preset>)}</PresetRow>
            <OptionFields>
              <label htmlFor="size">サイズ</label><SpinField id="size" value="1" label="サイズ" />
              <label htmlFor="density">濃度</label><SpinField id="density" value="255" tint label="濃度" />
              <label htmlFor="paint">塗り</label><Choice id="paint" value="ストローク重ね塗り" label="塗り" />
              <label htmlFor="shape">形状</label><Choice id="shape" value="● 円" label="形状" />
            </OptionFields>
            <CheckLabel><CheckBox type="checkbox" />細線</CheckLabel>
          </OptionBody>
          <Grip><i /></Grip>
          <Header title="color" />
          <ColorBody>
            <ColorTop>
              <SwatchPair><Swatch $back aria-label="Background colour" /><Swatch aria-label="Drawing colour" /></SwatchPair>
              <ButtonStack><MaskButton>MASK</MaskButton><MaskButton>REV</MaskButton></ButtonStack>
              <MaskColor />
              <ButtonStack>
                <StepButton aria-label="Add"><Art w={11}><path d="M4 0h3v4h4v3H7v4H4V7H0V4h4z" fill="#000" /></Art></StepButton>
                <StepButton aria-label="Remove"><Art w={11}><path d="M0 4h11v3H0z" fill="#000" /></Art></StepButton>
              </ButtonStack>
            </ColorTop>
            <ColorMain>
              <Channels>
                {['R', 'G', 'B'].map(c => (
                  <React.Fragment key={c}><label htmlFor={`ch-${c}`}>{c}</label><SpinField id={`ch-${c}`} value="0" label={c} /></React.Fragment>
                ))}
                <ValueButton>数値入力</ValueButton>
              </Channels>
              <SideTabs $h={98}><SideTab $on>RGB</SideTab><SideTab>HSV</SideTab><SideTab>MAP</SideTab></SideTabs>
            </ColorMain>
          </ColorBody>
          <Grip><i /></Grip>
          <Header title="color palette" />
          <PaletteBody>
            <TabRow><Tab $on>パレット</Tab><Tab>HLS</Tab><Tab>中間色</Tab></TabRow>
            <PaletteRow>
              <PaletteGrid />
              <PaletteScroll><Thumb /></PaletteScroll>
              <PaletteSide>
                <PaletteMenu aria-label="Palette menu"><Down /></PaletteMenu>
                {[1, 2, 3, 4].map(n => <SideTab key={n} $on={n === 1}>{n}</SideTab>)}
              </PaletteSide>
            </PaletteRow>
          </PaletteBody>
          <Grip><i /></Grip>
          <Header title="texture" />
          <TextureBody>
            <TextureSwatch aria-label="Texture" />
            <TextureName />
            <PaletteMenu aria-label="Texture menu" />
          </TextureBody>
        </Dock>
      </Main>
      <StatusBar>
        <StatusBox $w={94}>10, -116</StatusBox>
        <StatusBox $w={115}>400 x 400 300 DPI</StatusBox>
        <StatusHelp>[Shift: 1px消しゴム] [Ctrl: 定規設定] [Alt: スポイト]</StatusHelp>
      </StatusBar>
    </Window>
  );
}
